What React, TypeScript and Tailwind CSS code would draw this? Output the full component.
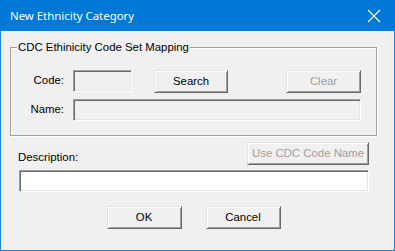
import React from 'react';

const ui = "font-['Tahoma','Liberation_Sans',sans-serif] text-[11.4px] leading-none text-black";

const raised =
  "flex items-center justify-center border border-t-[#e3e3e3] border-l-[#e3e3e3] border-b-[#696969] border-r-[#696969] bg-[#f0f0f0] shadow-[inset_1px_1px_0_#fff,inset_-1px_-1px_0_#a0a0a0]";

const sunken =
  "border border-t-[#a0a0a0] border-l-[#a0a0a0] border-b-white border-r-white shadow-[inset_1px_1px_0_#696969,inset_-1px_-1px_0_#e3e3e3]";

interface BtnProps {
  label: string;
  width: string;
  disabled?: boolean;
}

const Button: React.FC<BtnProps> = ({ label, width, disabled = false }) => (
  <div className={`${raised} ${width} h-[23px] ${disabled ? 'text-[#a0a0a0]' : 'text-black'}`}>
    {label}
  </div>
);

export default function App() {
  return (
    <div className={`w-[395px] h-[251px] flex flex-col ${ui}`}>
      {/* Title bar */}
      <div className="h-[31px] bg-[#0078d7] flex items-center justify-between pl-[10px] pr-[8px] shrink-0">
        <span className="font-['Segoe_UI','Noto_Sans',sans-serif] text-[11.4px] text-white">New Ethnicity Category</span>
        <svg width="14" height="14" viewBox="0 0 14 14" className="mr-[6px]">
          <path d="M1 1 L13 13 M13 1 L1 13" stroke="#fff" strokeWidth="1.1" />
        </svg>
      </div>

      {/* Client area */}
      <div className="flex-1 bg-[#f0f0f0] border-x border-b border-[#1883d7] flex flex-col">
        {/* Group box */}
        <div className="relative ml-[9px] mt-[16px] w-[367px] h-[89px] border border-[#a0a0a0] shadow-[inset_1px_1px_0_#fff,1px_1px_0_#fff] pt-[22px]">
          <span className="absolute left-[6px] -top-[6px] bg-[#f0f0f0] px-[1px]">CDC Ethinicity Code Set Mapping</span>

          <div className="flex items-start">
            <div className="w-[53px] h-[21px] flex items-center justify-end">Code:</div>
            <div className={`${sunken} ml-[9px] w-[59px] h-[22px] bg-[#f0f0f0]`} />
            <div className="ml-[22px]">
              <Button label="Search" width="w-[74px]" />
            </div>
            <div className="ml-[58px]">
              <Button label="Clear" width="w-[75px]" disabled />
            </div>
          </div>

          <div className="flex items-start mt-[6px]">
            <div className="w-[53px] h-[22px] flex items-center justify-end">Name:</div>
            <div className={`${sunken} ml-[9px] w-[288px] h-[22px] bg-[#f0f0f0]`} />
          </div>
        </div>

        {/* Description */}
        <div className="flex items-end justify-between pl-[17px] pr-[25px] mt-[6px]">
          <span className="mb-[2px]">Description:</span>
          <Button label="Use CDC Code Name" width="w-[122px]" disabled />
        </div>
        <div className={`${sunken} ml-[18px] mt-[5px] w-[350px] h-[22px] bg-white`} />

        {/* Dialog buttons */}
        <div className="flex justify-center gap-[24px] mt-[14px] pr-[8px]">
          <Button label="OK" width="w-[75px]" />
          <Button label="Cancel" width="w-[75px]" />
        </div>
      </div>
    </div>
  );
}
